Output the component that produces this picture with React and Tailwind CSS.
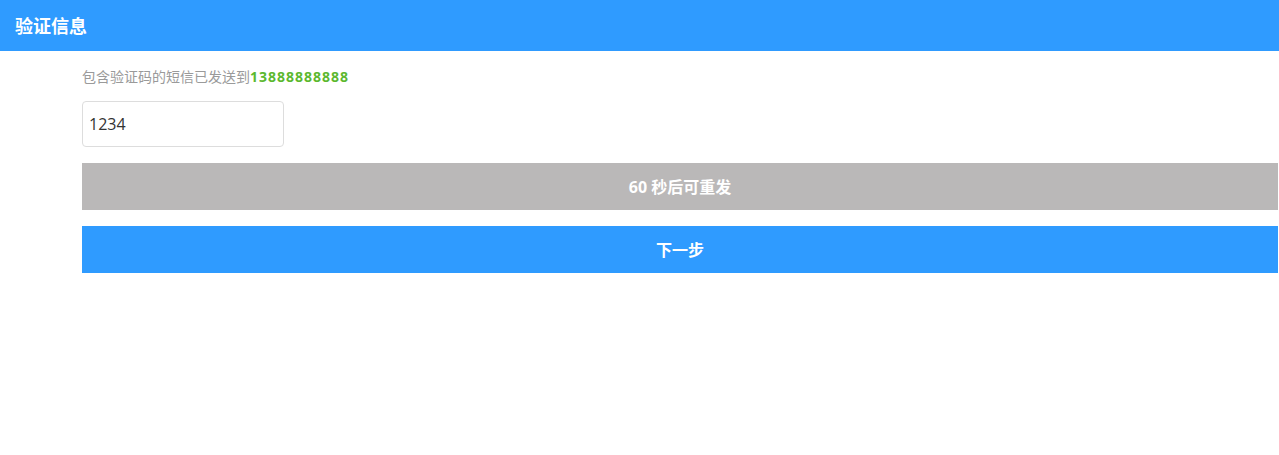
import React from 'react';

const App = () => {
  return (
    <div
      className="min-h-[455px] bg-white"
      style={{ fontFamily: '"Open Sans", "Noto Sans CJK SC", sans-serif' }}
    >
      <div className="h-[51px] bg-[#2f9bff] flex items-center px-[15px]">
        <h1 className="text-[18px] font-bold text-white leading-none">验证信息</h1>
      </div>

      <div className="pl-[82px] pr-[1px]">
        <p className="mt-[16px] h-[20px] flex items-center text-[14px] text-[#9a9a9a] leading-none">
          包含验证码的短信已发送到
          <span className="text-[14px] font-bold text-[#5cb82e] tracking-[1px]">13888888888</span>
        </p>

        <input
          type="text"
          defaultValue="1234"
          className="mt-[14px] block w-[202px] h-[46px] px-[6px] border border-[#dddddd] rounded-[4px] text-[16px] text-[#333333] outline-none"
        />

        <button className="mt-[16px] block w-full h-[47px] bg-[#bab8b8] text-white text-[16px] font-bold">
          60 秒后可重发
        </button>

        <button className="mt-[16px] block w-full h-[47px] bg-[#2f9bff] text-white text-[16px] font-bold">
          下一步
        </button>
      </div>
    </div>
  );
};

export default App;
